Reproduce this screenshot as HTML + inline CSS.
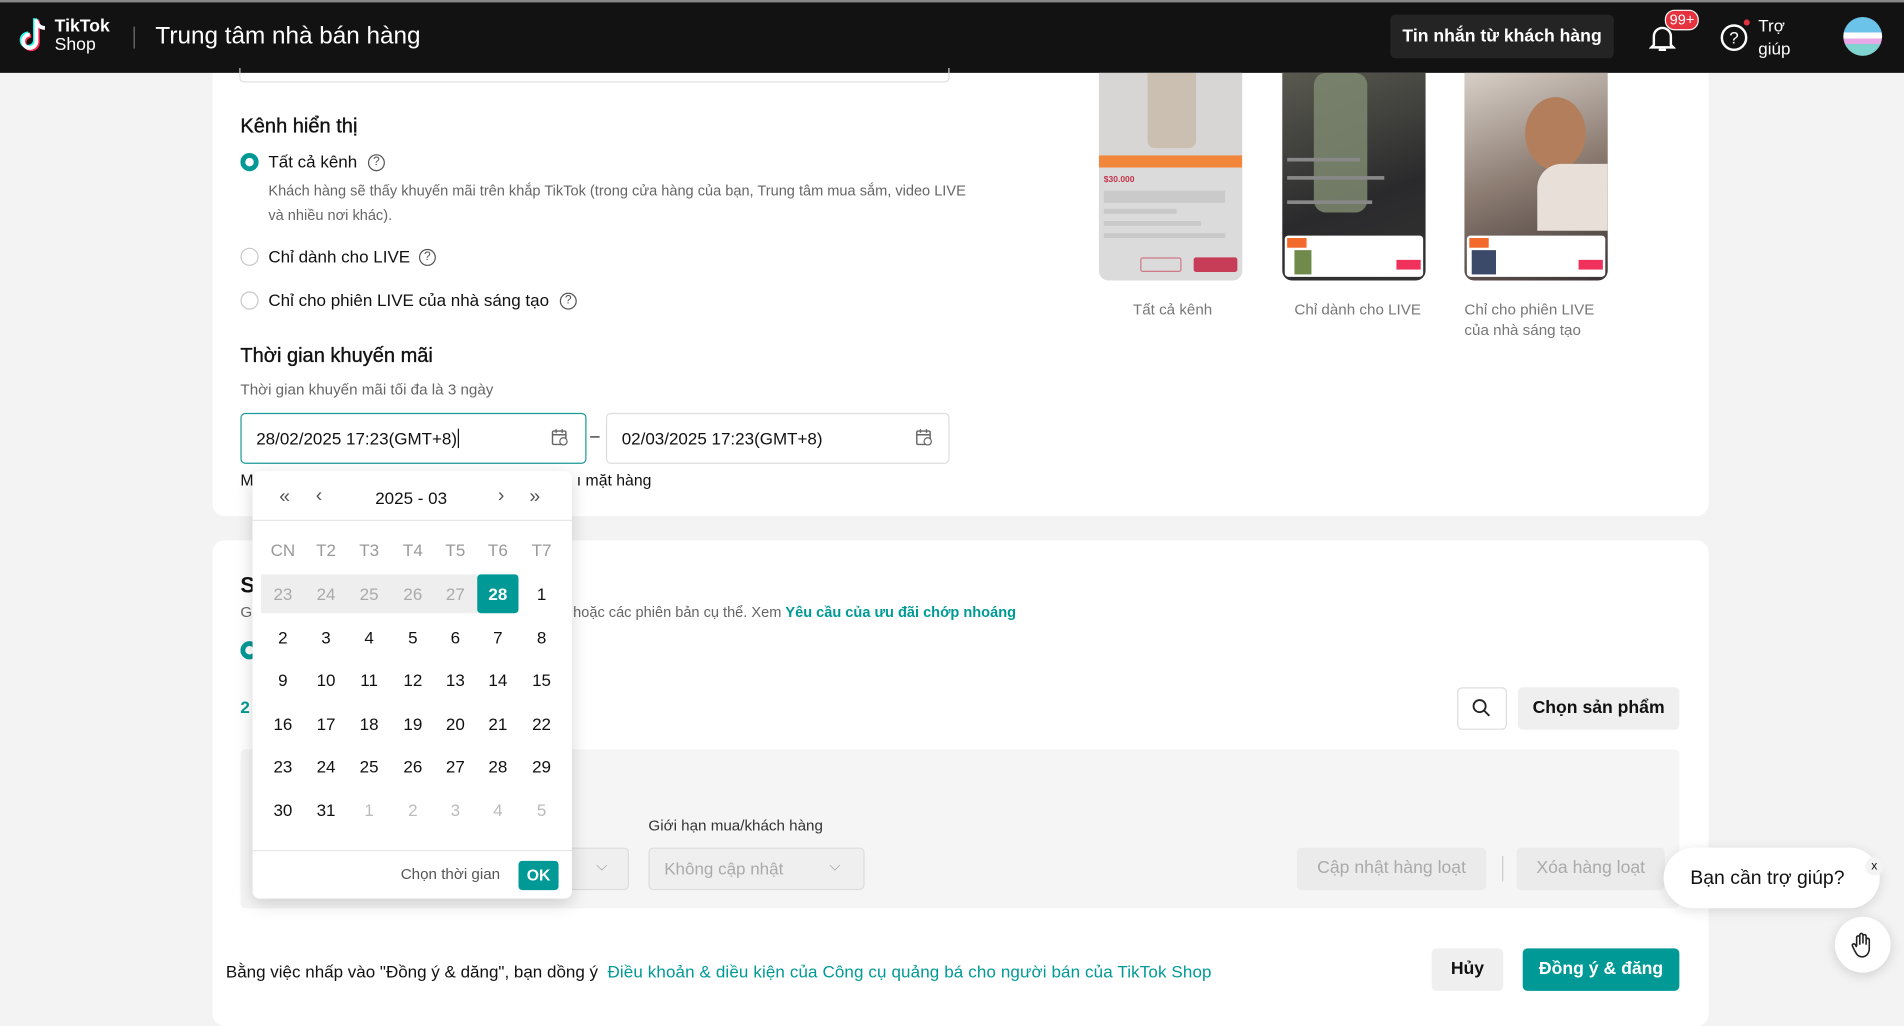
<!DOCTYPE html>
<html><head><meta charset="utf-8">
<style>
*{box-sizing:border-box;margin:0;padding:0}
html,body{width:1904px;height:1001px;overflow:hidden;background:#f3f3f3;font-family:"Liberation Sans","DejaVu Sans",sans-serif;color:#111}
#w{position:absolute;left:0;top:0;width:1568px;height:824px;transform:scale(1.21429);transform-origin:0 0;background:#f3f3f3}
.a{position:absolute;white-space:nowrap}
.teal{color:#009995}
.hdr{position:absolute;left:0;top:0;width:1568px;height:60px;background:#121212;border-top:2px solid #888}
.card{position:absolute;background:#fff;border-radius:10px}
.radio{position:absolute;width:15px;height:15px;border-radius:50%;border:1px solid #c8c8c8;background:#fff}
.radio.on{border:4.5px solid #009995}
.q{position:absolute;width:14px;height:14px;border-radius:50%;border:1.2px solid #555;font-size:10px;line-height:12px;text-align:center;color:#555}
.inp{position:absolute;height:42px;border:1px solid #ddd;border-radius:4px;font-size:14px;line-height:40px;padding-left:12px}
.cal{position:absolute;width:14px;height:14px}
.btn{position:absolute;border-radius:4px;text-align:center;font-size:14.5px;font-weight:bold}
.phone{position:absolute;top:60px;width:118px;height:171px;border-radius:0 0 8px 8px;overflow:hidden}
.lbl{position:absolute;font-size:12.5px;color:#777;line-height:17px}
.pop{position:absolute;left:208px;top:388px;width:263px;height:352px;background:#fff;border-radius:6px;box-shadow:0 4px 14px rgba(0,0,0,.16)}
.d{position:absolute;width:34px;text-align:center;font-size:14px;line-height:20px}
h3{position:absolute;font-size:16.5px;font-weight:normal;-webkit-text-stroke:0.3px #111;white-space:nowrap}
</style></head><body><div id="w">

<div class="card" style="left:175px;top:50px;width:1232px;height:375px;border-radius:0 0 10px 10px"></div>
<div class="card" style="left:175px;top:445px;width:1232px;height:400px"></div>

<div class="hdr">
 <svg class="a" style="left:15px;top:12px" width="26" height="30" viewBox="0 0 26 30">
  <path d="M15 2v18a5.5 5.5 0 1 1-5.5-5.5" fill="none" stroke="#25f4ee" stroke-width="3.2" transform="translate(-1.2,-1)"/>
  <path d="M15 2v18a5.5 5.5 0 1 1-5.5-5.5" fill="none" stroke="#fe2c55" stroke-width="3.2" transform="translate(1.2,1)"/>
  <path d="M15 2v18a5.5 5.5 0 1 1-5.5-5.5M15 2c0 4 3 7 7 7" fill="none" stroke="#fff" stroke-width="3.2"/>
 </svg>
 <div class="a" style="left:45px;top:13px;color:#fff;font-weight:bold;font-size:14.5px;line-height:15px">TikTok</div>
 <div class="a" style="left:45px;top:28px;color:#fff;font-size:14.5px;line-height:15px">Shop</div>
 <div class="a" style="left:110px;top:20px;width:1px;height:18px;background:#777"></div>
 <div class="a" style="left:128px;top:17px;color:#fff;font-size:20px">Trung tâm nhà bán hàng</div>
 <div class="a" style="left:1145px;top:10px;width:184px;height:36px;background:#242424;border-radius:4px;color:#fff;font-size:14.5px;font-weight:bold;text-align:center;line-height:36px">Tin nhắn từ khách hàng</div>
 <svg class="a" style="left:1358px;top:18px" width="22" height="24" viewBox="0 0 22 24"><path d="M4 17V10a7 7 0 0 1 14 0v7l2 2H2z" fill="none" stroke="#fff" stroke-width="2"/><path d="M8 21h6" stroke="#fff" stroke-width="2"/></svg>
 <div class="a" style="left:1371px;top:6px;background:#e5323f;color:#fff;font-size:12px;border-radius:8px;padding:0 3px;line-height:15px;border:1px solid #fff">99+</div>
 <div class="a" style="left:1417px;top:18px;width:22px;height:22px;border:2px solid #fff;border-radius:50%;color:#fff;font-size:14px;text-align:center;line-height:18px">?</div>
 <div class="a" style="left:1436px;top:14px;width:5px;height:5px;background:#e5323f;border-radius:50%"></div>
 <div class="a" style="left:1448px;top:10px;color:#fff;font-size:14px;line-height:19px">Trợ<br>giúp</div>
 <div class="a" style="left:1518px;top:12px;width:32px;height:32px;border-radius:50%;background:linear-gradient(#6cc3ea 0 40%,#fff 40% 55%,#e9a8e6 55% 70%,#7fd4d0 70%)"></div>
</div>

<div class="a" style="left:197px;top:56px;width:585px;height:12px;border:1px solid #ddd;border-top:none;border-radius:0 0 4px 4px"></div>

<h3 style="left:198px;top:95px">Kênh hiển thị</h3>
<div class="radio on" style="left:198px;top:126px"></div>
<div class="a" style="left:221px;top:125px;font-size:14px">Tất cả kênh</div>
<div class="q" style="left:303px;top:127px">?</div>
<div class="a" style="left:221px;top:147px;font-size:12px;color:#666;line-height:20px">Khách hàng sẽ thấy khuyến mãi trên khắp TikTok (trong cửa hàng của bạn, Trung tâm mua sắm, video LIVE<br>và nhiều nơi khác).</div>
<div class="radio" style="left:198px;top:204px"></div>
<div class="a" style="left:221px;top:203px;font-size:14px">Chỉ dành cho LIVE</div>
<div class="q" style="left:345px;top:205px">?</div>
<div class="radio" style="left:198px;top:240px"></div>
<div class="a" style="left:221px;top:239px;font-size:14px">Chỉ cho phiên LIVE của nhà sáng tạo</div>
<div class="q" style="left:461px;top:241px">?</div>

<h3 style="left:198px;top:284px">Thời gian khuyến mãi</h3>
<div class="a" style="left:198px;top:314px;font-size:12.5px;color:#666">Thời gian khuyến mãi tối đa là 3 ngày</div>
<div class="inp" style="left:198px;top:340px;width:285px;border-color:#1a9a96">28/02/2025 17:23(GMT+8)<span style="border-left:1px solid #111;margin-left:1px"></span></div>
<div class="a" style="left:486px;top:350px;font-size:14px">–</div>
<div class="inp" style="left:499px;top:340px;width:283px">02/03/2025 17:23(GMT+8)</div>
<svg class="cal" style="left:454px;top:353px" viewBox="0 0 14 14"><rect x="1" y="2" width="11" height="11" rx="1" fill="none" stroke="#666" stroke-width="1.2"/><path d="M1 5h11M4 0.5v3M9 0.5v3" stroke="#666" stroke-width="1.2"/><circle cx="10" cy="10.5" r="3" fill="#fff" stroke="#666"/></svg>
<svg class="cal" style="left:754px;top:353px" viewBox="0 0 14 14"><rect x="1" y="2" width="11" height="11" rx="1" fill="none" stroke="#666" stroke-width="1.2"/><path d="M1 5h11M4 0.5v3M9 0.5v3" stroke="#666" stroke-width="1.2"/><circle cx="10" cy="10.5" r="3" fill="#fff" stroke="#666"/></svg>
<div class="a" style="left:198px;top:388px;font-size:13px">M</div>
<div class="a" style="left:475px;top:388px;font-size:13px">ı mặt hàng</div>

<!-- phones -->
<div class="phone" style="left:905px;background:#d8d6d5">
 <div class="a" style="left:40px;top:0;width:40px;height:62px;background:#cbbfb1;border-radius:0 0 6px 6px"></div>
 <div class="a" style="left:0;top:68px;width:118px;height:10px;background:#f2873c"></div>
 <div class="a" style="left:0;top:78px;width:118px;height:93px;background:#dcdbdb"></div>
 <div class="a" style="left:4px;top:85px;font-size:7px;color:#c2334a;font-weight:bold">$30.000</div>
 <div class="a" style="left:4px;top:97px;width:100px;height:10px;background:#cacaca"></div>
 <div class="a" style="left:4px;top:112px;width:60px;height:4px;background:#c9c9c9"></div>
 <div class="a" style="left:4px;top:122px;width:80px;height:4px;background:#c9c9c9"></div>
 <div class="a" style="left:4px;top:132px;width:100px;height:4px;background:#c9c9c9"></div>
 <div class="a" style="left:34px;top:152px;width:34px;height:12px;border:1px solid #d07a86;border-radius:2px"></div>
 <div class="a" style="left:78px;top:152px;width:36px;height:12px;background:#c73c57;border-radius:2px"></div>
</div>
<div class="phone" style="left:1056px;background:linear-gradient(160deg,#5a5a50,#2a2a2c 60%,#333)">
 <div class="a" style="left:26px;top:0;width:44px;height:115px;background:#7d8870;border-radius:10px;opacity:.85"></div>
 <div class="a" style="left:4px;top:70px;width:60px;height:3px;background:#888"></div>
 <div class="a" style="left:4px;top:85px;width:80px;height:3px;background:#888"></div>
 <div class="a" style="left:4px;top:105px;width:70px;height:3px;background:#888"></div>
 <div class="a" style="left:2px;top:134px;width:114px;height:34px;background:#fff;border-radius:3px"></div>
 <div class="a" style="left:4px;top:136px;width:16px;height:8px;background:#f26a2c"></div>
 <div class="a" style="left:10px;top:146px;width:14px;height:20px;background:#6f8a4a"></div>
 <div class="a" style="left:94px;top:154px;width:20px;height:8px;background:#f0315b"></div>
</div>
<div class="phone" style="left:1206px;background:linear-gradient(160deg,#d8d0c8,#8a7a70 50%,#3a3232)">
 <div class="a" style="left:50px;top:20px;width:50px;height:60px;background:#b27e5c;border-radius:50%"></div>
 <div class="a" style="left:60px;top:75px;width:58px;height:55px;background:#e8e0d8;border-radius:20px 0 0 0"></div>
 <div class="a" style="left:2px;top:134px;width:114px;height:34px;background:#fff;border-radius:3px"></div>
 <div class="a" style="left:4px;top:136px;width:16px;height:8px;background:#f26a2c"></div>
 <div class="a" style="left:6px;top:146px;width:20px;height:20px;background:#3c4a6a"></div>
 <div class="a" style="left:94px;top:154px;width:20px;height:8px;background:#f0315b"></div>
</div>
<div class="lbl" style="left:933px;top:247px">Tất cả kênh</div>
<div class="lbl" style="left:1066px;top:247px">Chỉ dành cho LIVE</div>
<div class="lbl" style="left:1206px;top:247px">Chỉ cho phiên LIVE<br>của nhà sáng tạo</div>

<!-- second card -->
<div class="a" style="left:198px;top:472px;font-size:18px;font-weight:bold">S</div>
<div class="a" style="left:198px;top:497px;font-size:12.5px;color:#666">G</div>
<div class="a" style="left:472px;top:497px;font-size:12px;color:#666">hoặc các phiên bản cụ thể. Xem <b class="teal">Yêu cầu của ưu đãi chớp nhoáng</b></div>
<div class="radio on" style="left:198px;top:528px"></div>
<div class="a teal" style="left:198px;top:574px;font-size:14px;font-weight:bold">2</div>
<div class="a" style="left:1200px;top:566px;width:41px;height:35px;border:1px solid #ddd;border-radius:4px;background:#fff"></div>
<svg class="a" style="left:1212px;top:575px" width="16" height="16" viewBox="0 0 16 16"><circle cx="6.5" cy="6.5" r="5" fill="none" stroke="#222" stroke-width="1.5"/><path d="M10 10l4.5 4.5" stroke="#222" stroke-width="1.5"/></svg>
<div class="btn" style="left:1250px;top:566px;width:133px;height:35px;background:#efefef;line-height:35px">Chọn sản phẩm</div>

<div class="a" style="left:198px;top:617px;width:1185px;height:131px;background:#f5f5f5;border-radius:4px"></div>
<div class="a" style="left:534px;top:673px;font-size:12.5px;color:#333">Giới hạn mua/khách hàng</div>
<div class="a" style="left:400px;top:698px;width:118px;height:35px;border:1px solid #ddd;border-radius:4px;background:#efefef"></div>
<div class="a" style="left:491px;top:706px;font-size:12px;color:#999">⌵</div>
<div class="a" style="left:534px;top:698px;width:178px;height:35px;border:1px solid #ddd;border-radius:4px;background:#efefef;font-size:14px;color:#aaa;line-height:33px;padding-left:12px">Không cập nhật</div>
<div class="a" style="left:683px;top:706px;font-size:12px;color:#999">⌵</div>
<div class="btn" style="left:1068px;top:698px;width:156px;height:35px;background:#ebebeb;color:#aaa;line-height:35px;font-weight:normal">Cập nhật hàng loạt</div>
<div class="a" style="left:1237px;top:705px;width:1px;height:21px;background:#ccc"></div>
<div class="btn" style="left:1249px;top:698px;width:122px;height:35px;background:#ebebeb;color:#aaa;line-height:35px;font-weight:normal">Xóa hàng loạt</div>

<div class="a" style="left:186px;top:792px;font-size:14px">Bằng việc nhấp vào "Đồng ý &amp; dăng", bạn dồng ý &nbsp;<span class="teal" style="letter-spacing:0.1px">Điều khoản &amp; diều kiện của Công cụ quảng bá cho người bán của TikTok Shop</span></div>
<div class="btn" style="left:1179px;top:781px;width:59px;height:35px;background:#efefef;line-height:35px">Hủy</div>
<div class="btn" style="left:1254px;top:781px;width:129px;height:35px;background:#009995;color:#fff;line-height:35px">Đồng ý &amp; đăng</div>

<!-- chat -->
<div class="a" style="left:1370px;top:698px;width:178px;height:50px;background:#fff;border-radius:25px;box-shadow:0 2px 10px rgba(0,0,0,.12);font-size:16px;line-height:52px;padding-left:22px">Bạn cần trợ giúp?</div>
<div class="a" style="left:1536px;top:706px;width:15px;height:15px;border-radius:50%;background:#f3f3f3;font-size:10px;text-align:center;line-height:15px">x</div>
<div class="a" style="left:1511px;top:755px;width:46px;height:46px;border-radius:50%;background:#fff;box-shadow:0 2px 10px rgba(0,0,0,.15)"></div>
<svg class="a" style="left:1524px;top:767px" width="20" height="22" viewBox="0 0 20 22"><path d="M5 12V5a1.3 1.3 0 0 1 2.6 0v6M7.6 10V3a1.3 1.3 0 0 1 2.6 0v7M10.2 10V4a1.3 1.3 0 0 1 2.6 0v7M12.8 11V7a1.3 1.3 0 0 1 2.6 0v7c0 4-2.5 7-6 7-3 0-4.5-2-6-5L1.5 12a1.3 1.3 0 0 1 2.2-1.3L5 13" fill="none" stroke="#222" stroke-width="1.3" stroke-linejoin="round"/></svg>

<!-- calendar popup -->
<div class="pop">
 <div class="a" style="left:22px;top:13px;font-size:16px;color:#555">«</div>
 <div class="a" style="left:52px;top:12px;font-size:16px;color:#555">‹</div>
 <div class="a" style="left:101px;top:14px;font-size:14px;font-weight:500">2025 - 03</div>
 <div class="a" style="left:202px;top:12px;font-size:16px;color:#555">›</div>
 <div class="a" style="left:228px;top:13px;font-size:16px;color:#555">»</div>
 <div class="a" style="left:0;top:40px;width:263px;height:1px;background:#e5e5e5"></div>
 <div class="a" style="left:7px;top:85px;width:178px;height:32px;background:#eee"></div>
 <div class="a" style="left:185px;top:85px;width:34px;height:32px;background:#009995;border-radius:3px"></div>
 <div class="a" style="left:0;top:312px;width:263px;height:1px;background:#e5e5e5"></div>
 <div class="a" style="left:122px;top:325px;font-size:12.5px;color:#555">Chọn thời gian</div>
 <div class="a" style="left:219px;top:321px;width:33px;height:24px;background:#009995;border-radius:3px;color:#fff;font-size:13px;font-weight:bold;text-align:center;line-height:24px">OK</div>
 <div id="g"></div>
</div>
<script>
(function(){var g=document.getElementById('g'),xs=[8,43.5,79,115,150,185,221],h='';
var wd=['CN','T2','T3','T4','T5','T6','T7'];
for(var i=0;i<7;i++)h+='<div class="d" style="left:'+xs[i]+'px;top:55px;color:#999">'+wd[i]+'</div>';
var rows=[[23,24,25,26,27,28,1],[2,3,4,5,6,7,8],[9,10,11,12,13,14,15],[16,17,18,19,20,21,22],[23,24,25,26,27,28,29],[30,31,1,2,3,4,5]];
for(var r=0;r<6;r++)for(i=0;i<7;i++){var c='#111',fw='normal';
if(r==0&&i<5)c='#aaa';if(r==0&&i==5){c='#fff';fw='bold'}if(r==5&&i>1)c='#bbb';
h+='<div class="d" style="left:'+xs[i]+'px;top:'+(91+r*35.5)+'px;color:'+c+';font-weight:'+fw+'">'+rows[r][i]+'</div>';}
g.innerHTML=h;})();
</script>
</div></body></html>
